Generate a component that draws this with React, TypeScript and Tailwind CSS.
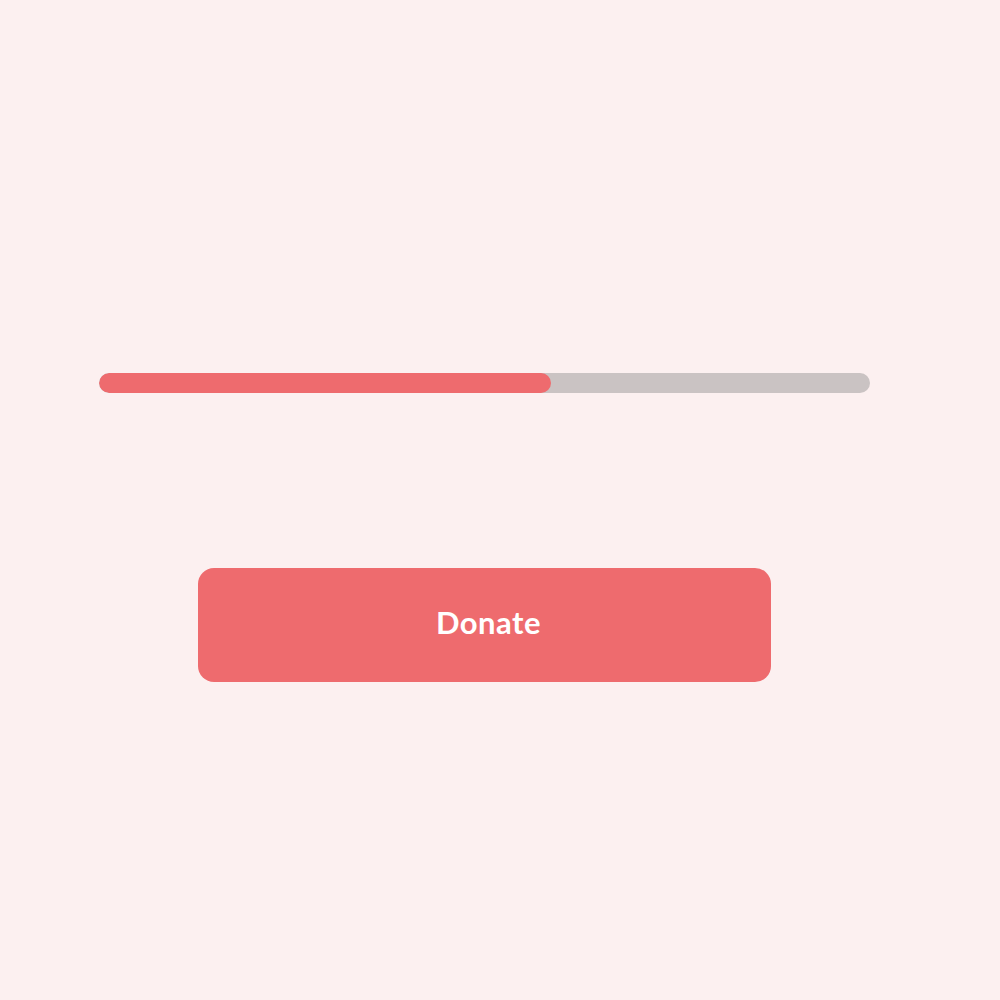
export default function App() {
  return (
    <div className="min-h-screen w-full bg-[#fcf0f0] pt-[373px] font-['Lato','Open_Sans',sans-serif]">
      <div className="ml-[99px] flex w-[771px] flex-col items-center gap-[175px]">
        <div className="h-5 w-full overflow-hidden rounded-full bg-[#cac3c3]">
          <div className="h-full w-[452px] rounded-full bg-[#ee6b6e]" />
        </div>
        <button className="flex h-[114px] w-[573px] items-center justify-center rounded-2xl bg-[#ee6b6e] pb-[5px] pl-2 text-[31px] font-bold tracking-[0.5px] text-white">
          Donate
        </button>
      </div>
    </div>
  );
}
